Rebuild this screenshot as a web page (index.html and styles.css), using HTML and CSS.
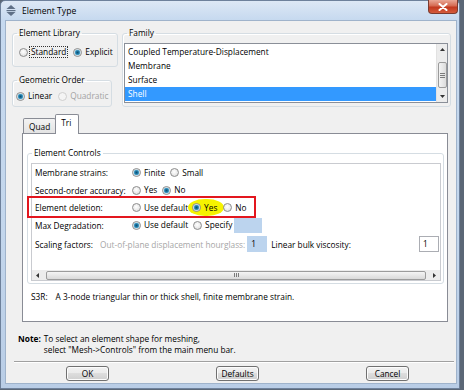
FILE: index.html
```html
<!DOCTYPE html>
<html>
<head>
<meta charset="utf-8">
<link rel="stylesheet" href="styles.css">
</head>
<body>
<div class="window">
  <div class="titlebar">
    <svg class="appicon" width="10" height="11" viewBox="0 0 10 11">
      <polygon points="5,0 9.5,4 0.5,4" fill="#5f7087"/>
      <rect x="0.5" y="5" width="9" height="1.2" fill="#5f7087"/>
      <polygon points="0.5,7 9.5,7 5,11" fill="#5f7087"/>
    </svg>
    <span class="title">Element Type</span>
    <div class="close">
      <svg width="10" height="8" viewBox="0 0 10 8">
        <path d="M1.5 1 L8.5 7 M8.5 1 L1.5 7" stroke="#fff" stroke-width="2" stroke-linecap="round"/>
      </svg>
    </div>
  </div>
  <div class="client">
    <div class="top">
      <div class="leftcol">
        <fieldset class="group lib">
          <legend>Element Library</legend>
          <div class="gbody lib-body">
            <span class="opt"><span class="radio"></span><span class="focus">Standard</span></span>
            <span class="opt"><span class="radio on"></span><span>Explicit</span></span>
          </div>
        </fieldset>
        <fieldset class="group geo">
          <legend>Geometric Order</legend>
          <div class="gbody geo-body">
            <span class="opt"><span class="radio on"></span><span>Linear</span></span>
            <span class="opt disabled"><span class="radio"></span><span>Quadratic</span></span>
          </div>
        </fieldset>
      </div>
      <fieldset class="group family">
        <legend>Family</legend>
        <div class="gbody family-body">
          <div class="listbox">
            <div class="items">
              <div class="item">Coupled Temperature-Displacement</div>
              <div class="item">Membrane</div>
              <div class="item">Surface</div>
              <div class="item sel">Shell</div>
            </div>
            <div class="vscroll">
              <svg class="arr" width="7" height="5" viewBox="0 0 7 5"><polygon points="3.5,1 6,4 1,4" fill="#333"/></svg>
              <div class="vthumb"><span></span><span></span><span></span></div>
              <svg class="arr" width="7" height="5" viewBox="0 0 7 5"><polygon points="1,1 6,1 3.5,4" fill="#333"/></svg>
            </div>
          </div>
        </div>
      </fieldset>
    </div>

    <div class="tabs">
      <div class="tab">Quad</div>
      <div class="tab active">Tri</div>
    </div>
    <div class="panel">
      <fieldset class="group controls">
        <legend>Element Controls</legend>
        <div class="gbody controls-body">
          <div class="scrollwin">
            <div class="rows">
              <div class="row">
                <span class="lbl">Membrane strains:</span>
                <span class="opts">
                  <span class="opt"><span class="radio on"></span><span>Finite</span></span>
                  <span class="opt"><span class="radio"></span><span>Small</span></span>
                </span>
              </div>
              <div class="row">
                <span class="lbl">Second-order accuracy:</span>
                <span class="opts">
                  <span class="opt"><span class="radio"></span><span>Yes</span></span>
                  <span class="opt"><span class="radio on"></span><span>No</span></span>
                </span>
              </div>
              <div class="row marked">
                <span class="lbl">Element deletion:</span>
                <span class="opts">
                  <span class="opt"><span class="radio"></span><span>Use default</span></span>
                  <span class="opt hl"><span class="radio on"></span><span>Yes</span></span>
                  <span class="opt"><span class="radio"></span><span>No</span></span>
                </span>
                <span class="redbox"></span>
              </div>
              <div class="row">
                <span class="lbl">Max Degradation:</span>
                <span class="opts">
                  <span class="opt"><span class="radio on"></span><span>Use default</span></span>
                  <span class="opt"><span class="radio"></span><span>Specify</span></span>
                  <span class="field spec"></span>
                </span>
              </div>
              <div class="row last">
                <span class="lbl2">Scaling factors:</span>
                <span class="gray">Out-of-plane displacement hourglass:</span>
                <span class="field small">1</span>
                <span class="lbl3">Linear bulk viscosity:</span>
                <span class="input">1</span>
              </div>
            </div>
            <div class="hscroll">
              <svg class="arr" width="5" height="7" viewBox="0 0 5 7"><polygon points="1,3.5 4,1 4,6" fill="#333"/></svg>
              <div class="hthumb"><span></span><span></span><span></span></div>
              <svg class="arr" width="5" height="7" viewBox="0 0 5 7"><polygon points="1,1 4,3.5 1,6" fill="#333"/></svg>
            </div>
          </div>
        </div>
      </fieldset>
      <div class="desc"><span class="code">S3R:</span><span>A 3-node triangular thin or thick shell, finite membrane strain.</span></div>
    </div>

    <div class="note">
      <b class="note-lbl">Note:</b>
      <div class="note-text">To select an element shape for meshing,<br>select "Mesh-&gt;Controls" from the main menu bar.</div>
    </div>
    <div class="sep"></div>
    <div class="buttons">
      <div class="btn">OK</div>
      <div class="btn">Defaults</div>
      <div class="btn">Cancel</div>
    </div>
  </div>
</div>
</body>
</html>
```

FILE: styles.css
```css
* { box-sizing: border-box; }
html, body { margin: 0; }
body {
  width: 464px;
  height: 390px;
  overflow: hidden;
  background: #5b6776;
  font-family: "Open Sans", "Noto Sans", sans-serif;
  font-size: 8.3px;
  color: #000;
}
.window {
  width: 460px;
  height: 389px;
  border: 1px solid #6e819b;
  border-radius: 5px 5px 0 0;
  background: linear-gradient(#dde8f5, #c6d9ef 19px, #c3d6ec 60%, #b9cde6);
  padding: 0 2px 4px 4px;
  display: flex;
  flex-direction: column;
}
.titlebar {
  height: 19px;
  flex: none;
  display: flex;
  align-items: center;
}
.appicon { margin-left: 1px; margin-right: 6px; }
.title { font-size: 8.6px; color: #000; }
.close {
  margin-left: auto;
  margin-right: -1px;
  align-self: flex-start;
  margin-top: -1px;
  width: 30px;
  height: 14px;
  border: 1px solid #7b3a2e;
  border-top: none;
  border-radius: 0 0 4px 4px;
  background: linear-gradient(#e9a896, #d56a52 45%, #c2391f 55%, #d45b3c);
  display: flex;
  align-items: center;
  justify-content: center;
}
.client {
  flex: 1;
  border: 1px solid #9fb3cb;
  background: #f0f0f0;
  padding: 6px 0 0 6px;
  display: flex;
  flex-direction: column;
}
/* group boxes */
fieldset.group {
  margin: 0;
  padding: 0;
  min-width: 0;
  border: 1px solid #d5dde3;
  border-radius: 3px;
  box-shadow: inset 1px 1px 0 #fff;
}
fieldset.group > legend {
  margin-left: 4px;
  padding: 0 2px;
  height: 12px;
  line-height: 12px;
}
.top {
  display: flex;
  gap: 4px;
  margin-right: 5px;
}
.leftcol {
  width: 106px;
  flex: none;
  display: flex;
  flex-direction: column;
  gap: 7px;
}
fieldset.lib { height: 40px; }
.lib-body {
  display: flex;
  padding: 7px 0 0 6px;
  gap: 5px;
}
fieldset.geo { width: 100px; height: 33px; }
.geo-body {
  display: flex;
  padding: 4px 0 0 3px;
  gap: 6px;
}
.opt {
  display: inline-flex;
  align-items: center;
  gap: 3px;
  height: 12px;
  line-height: 12px;
  white-space: nowrap;
}
.radio {
  width: 9px;
  height: 9px;
  flex: none;
  border-radius: 50%;
  border: 1px solid #8d8d8d;
  background: radial-gradient(circle at 45% 40%, #ffffff 0, #f0f0f0 40%, #d6d6d6 100%);
}
.radio.on {
  background: radial-gradient(circle, #0e4f73 0, #1f7aa6 1.6px, #63b2d6 2.6px, #f2f2f2 3.2px, #e2e2e2 100%);
}
.disabled { color: #a3a3a3; }
.disabled .radio { border-color: #cfcfcf; background: #f4f4f4; }
.focus {
  border: 1px dotted #333;
  padding: 0 1px;
  line-height: 10px;
  height: 12px;
  margin-left: -2px;
}
fieldset.family { flex: 1; height: 80px; }
.family-body { padding: 4px 2px 2px 1px; }
.listbox {
  height: 60px;
  border: 1px solid #8a8f98;
  background: #fff;
  display: flex;
}
.items { flex: 1; padding-top: 1px; }
.item {
  height: 14px;
  line-height: 14px;
  padding-left: 3px;
  white-space: nowrap;
}
.item.sel { background: #3399ff; color: #fff; }
.vscroll {
  width: 11px;
  flex: none;
  background: #ececec;
  border-left: 1px solid #e2e2e2;
  display: flex;
  flex-direction: column;
  align-items: center;
  padding: 3px 0 3px;
}
.vscroll .arr { flex: none; }
.vthumb {
  margin-top: 10px;
  width: 9px;
  height: 26px;
  border: 1px solid #9b9b9b;
  border-radius: 2px;
  background: linear-gradient(90deg, #f4f4f4, #dcdcdc);
  display: flex;
  flex-direction: column;
  justify-content: center;
  align-items: center;
  gap: 1px;
}
.vthumb span { width: 5px; height: 1px; background: #7a7a7a; }
.vscroll .arr:last-child { margin-top: auto; }
/* tabs */
.tabs {
  display: flex;
  align-items: flex-end;
  margin: 7px 0 -1px 11px;
  height: 20px;
  position: relative;
  z-index: 1;
}
.tab {
  border: 1px solid #898c95;
  border-bottom: none;
  padding: 0 5px;
  height: 15px;
  line-height: 16px;
  margin-bottom: 1px;
  background: linear-gradient(#f3f3f3, #e3e3e3);
  border-radius: 2px 2px 0 0;
}
.tab.active {
  height: 20px;
  margin-bottom: 0;
  margin-left: -1px;
  background: #fff;
  line-height: 16px;
  padding: 0 7px 0 5px;
}
.panel {
  margin: 0 8px 0 10px;
  height: 189px;
  flex: none;
  border: 1px solid #898c95;
  background: #fff;
  display: flex;
  flex-direction: column;
}
fieldset.controls {
  margin: 13px 3px 0 4px;
  height: 137px;
  flex: none;
}
.controls-body { padding: 4px 2px 2px 3px; }
.scrollwin {
  height: 118px;
  border: 1px solid #c9cbd0;
  background: #fff;
  display: flex;
  flex-direction: column;
}
.rows { height: 106px; padding-left: 3px; }
.row {
  height: 17.5px;
  display: flex;
  align-items: center;
  white-space: nowrap;
  position: relative;
}
.row.last { height: 20px; padding-right: 1px; }
.lbl { width: 97px; flex: none; }
.opts { display: flex; align-items: center; gap: 5px; }
.opt.hl {
  background: #f6f300;
  border-radius: 18px / 9px;
  height: 17px;
  padding: 0 7px 0 4px;
  margin: 0 -6px 0 -5px;
}
.field {
  display: inline-block;
  background: #bcd4ee;
}
.field.spec { width: 28px; height: 15px; margin-left: -3px; margin-top: 1px; }
.lbl2 { width: 65px; flex: none; }
.gray { color: #a6a6a6; }
.field.small {
  width: 20px;
  height: 16px;
  line-height: 16px;
  padding-left: 4px;
  margin-left: 2px;
}
.lbl3 { margin-left: 4px; }
.input {
  margin-left: auto;
  width: 20px;
  height: 16px;
  line-height: 14px;
  border: 1px solid #abadb3;
  padding-left: 3px;
}
.redbox {
  position: absolute;
  left: -8px;
  top: -3px;
  width: 229px;
  height: 22px;
  border: 2px solid #e3161e;
  pointer-events: none;
}
.hscroll {
  height: 10px;
  flex: none;
  background: #ececec;
  display: flex;
  align-items: center;
  padding: 0 3px 0 3px;
}
.hthumb {
  flex: 1;
  margin: 0 6px 0 6px;
  height: 9px;
  border: 1px solid #9b9b9b;
  border-radius: 2px;
  background: linear-gradient(#f4f4f4, #d9d9d9);
  display: flex;
  justify-content: center;
  align-items: center;
  gap: 1px;
}
.hthumb span { width: 1px; height: 4px; background: #7a7a7a; }
.desc {
  margin: 7px 0 0 8px;
  line-height: 12px;
  display: flex;
  gap: 8px;
  white-space: nowrap;
}
.note {
  margin: 11px 0 0 6px;
  display: flex;
  gap: 3px;
  line-height: 11px;
}
.note-lbl { font-weight: bold; }
.sep {
  margin: 6px 2px 0 2px;
  height: 2px;
  border-top: 1px solid #a0a0a0;
  border-bottom: 1px solid #fff;
}
.buttons {
  display: flex;
  gap: 107px;
  margin: 3px 0 0 54px;
}
.btn {
  width: 43px;
  height: 15px;
  border: 1px solid #707070;
  border-radius: 3px;
  background: linear-gradient(#f2f2f2, #ebebeb 45%, #dddddd 50%, #cfcfcf);
  box-shadow: inset 0 0 0 1px #fcfcfc;
  text-align: center;
  line-height: 13px;
}
```
